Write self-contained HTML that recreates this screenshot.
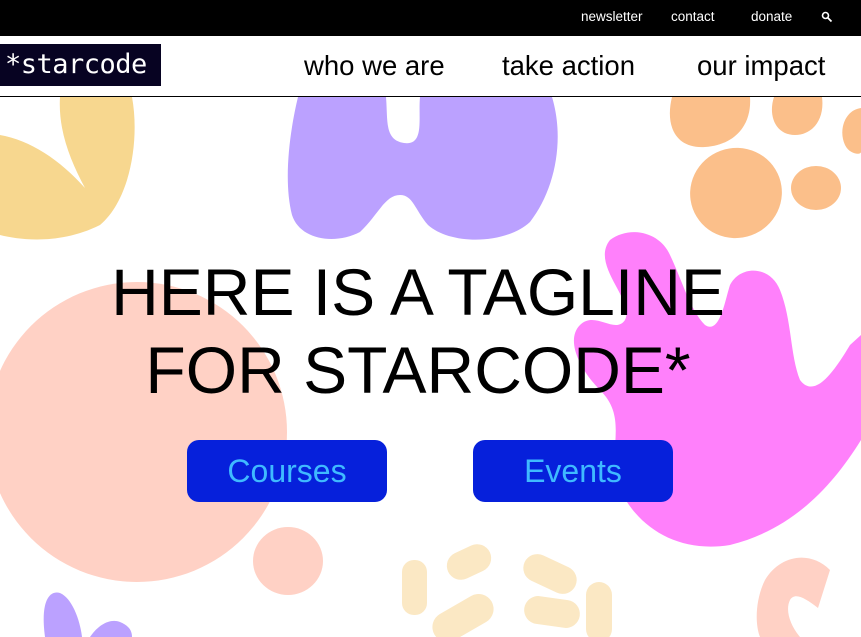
<!DOCTYPE html>
<html><head><meta charset="utf-8"><style>
*{margin:0;padding:0;box-sizing:border-box}
body{width:861px;height:637px;overflow:hidden;background:#fff;font-family:"Liberation Sans",sans-serif;position:relative}
.top{position:absolute;left:0;top:0;width:861px;height:36px;background:#000;color:#fff;font-size:13.5px}
.top span{position:absolute;top:9px}
.nav{position:absolute;left:0;top:36px;width:861px;height:61px;border-bottom:1px solid #000;background:#fff;z-index:2}
.logo{position:absolute;left:0;top:8px;width:161px;height:42px;background:#070322;color:#fff;font-family:"DejaVu Sans Mono","Liberation Mono",monospace;font-size:27px;line-height:42px;padding-left:5px;letter-spacing:-0.5px}
.nav a{position:absolute;top:14px;font-size:27.5px;color:#000;text-decoration:none}
svg.bg{position:absolute;left:0;top:0}
.tag{position:absolute;left:0;width:836px;text-align:center;font-size:66px;color:#000;line-height:78px;top:253px;letter-spacing:0px}
.btn{position:absolute;top:440px;width:200px;height:62px;background:#0620db;border-radius:12px;color:#3fbaff;font-size:32px;text-align:center;line-height:62px}
</style></head><body>
<svg class="bg" width="861" height="637" viewBox="0 0 861 637">
<g fill="#f7d78f">
<path d="M60 97 L132 97 C140 140 130 200 100 225 C60 245 20 240 0 235 L0 135 C30 140 60 160 85 188 C70 160 58 130 60 97Z"/>
</g>
<path fill="#bba1ff" d="M298 97 L386 97 C388 120 384 140 404 143 C425 146 418 118 420 97 L552 97 C565 140 555 190 530 222 C505 245 450 245 428 225 C415 210 413 195 400 195 C385 195 378 215 360 232 C335 245 300 240 292 215 C283 180 290 130 298 97Z"/>
<g fill="#fbbf8a">
<path d="M672 97 L750 97 C752 125 735 145 705 147 C675 149 665 125 672 97Z"/>
<path d="M774 97 L822 97 C825 120 812 135 795 135 C775 135 768 115 774 97Z"/>
<path d="M861 108 C845 110 838 130 845 145 C850 155 861 155 861 152Z"/>
<ellipse cx="736" cy="193" rx="46" ry="45" transform="rotate(-20 736 193)"/>
<ellipse cx="816" cy="188" rx="25" ry="22"/>
</g>
<circle cx="137" cy="432" r="150" fill="#ffd1c5"/>
<ellipse cx="288" cy="561" rx="35" ry="34" fill="#ffd1c5"/>
<path fill="#ff80fb" d="M610 240 C630 225 660 232 670 255 C682 280 690 310 705 325 C720 335 725 300 730 285 C740 265 770 265 780 290 C792 320 790 355 800 380 C815 400 835 370 850 345 L861 335 L861 440 C830 490 790 530 730 545 C680 553 640 530 620 490 C605 450 630 420 600 390 C580 370 565 340 580 325 C595 310 615 335 625 320 C635 300 590 265 610 240Z"/>
<g fill="#fbe8c4">
<rect x="402" y="560" width="25" height="55" rx="12"/>
<rect x="446" y="548" width="46" height="28" rx="14" transform="rotate(-25 469 562)"/>
<rect x="522" y="560" width="56" height="28" rx="14" transform="rotate(25 550 574)"/>
<rect x="430" y="603" width="66" height="30" rx="15" transform="rotate(-30 463 618)"/>
<rect x="524" y="598" width="56" height="28" rx="14" transform="rotate(8 552 612)"/>
<rect x="586" y="582" width="26" height="60" rx="13"/>
</g>
<path fill="#ffd1c5" d="M830 570 C810 550 780 555 765 580 C755 600 755 625 760 637 L800 637 C790 625 785 610 790 600 C795 592 805 598 818 608Z"/>
<g fill="#bba1ff">
<path d="M45 637 C40 600 50 590 60 593 C72 598 80 620 82 637Z"/>
<path d="M90 637 C98 625 110 618 120 622 C130 626 132 632 132 637Z"/>
</g>
</svg>
<div class="top"><span style="left:581px">newsletter</span><span style="left:671px">contact</span><span style="left:751px">donate</span>
<svg style="position:absolute;left:821px;top:11px" width="12" height="12" viewBox="0 0 12 12"><circle cx="4.5" cy="4.5" r="3" stroke="#fff" stroke-width="1.6" fill="none"/><path d="M7 7 L10.5 10.5" stroke="#fff" stroke-width="1.8"/></svg></div>
<div class="nav"><div class="logo">*starcode</div>
<a style="left:304px">who we are</a><a style="left:502px">take action</a><a style="left:697px">our impact</a></div>
<div class="tag">HERE IS A TAGLINE<br>FOR STARCODE*</div>
<div class="btn" style="left:187px">Courses</div>
<div class="btn" style="left:473px">Events</div>
</body></html>
